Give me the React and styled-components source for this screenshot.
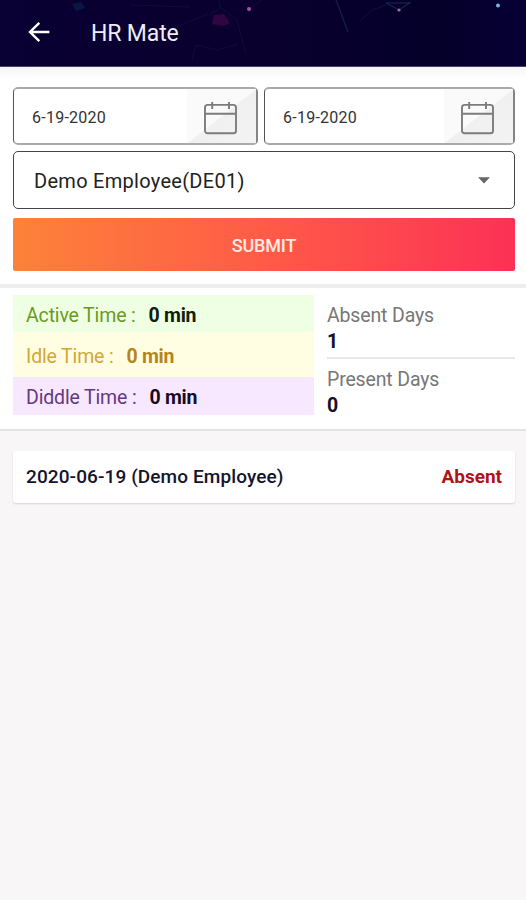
import React from "react"
import styled, { createGlobalStyle } from "styled-components"

const times = [
  { label: "Active Time :", value: "0 min", bg: "#efffe3", color: "#6b9a1f", strong: "#10200a", height: 37, top: 3 },
  { label: "Idle Time :", value: "0 min", bg: "#fffee2", color: "#d3a638", strong: "#b5851a", height: 45, top: 4 },
  { label: "Diddle Time :", value: "0 min", bg: "#f7e8ff", color: "#65387f", strong: "#170b26", height: 38, top: 3 },
]

const CalendarIcon = () => (
  <svg width="33" height="34" viewBox="0 0 33 34" fill="none" stroke="#7c7c7c" strokeWidth="1.9">
    <rect x="1" y="3.9" width="31" height="28.4" rx="2.6" />
    <path d="M1 12.7h31M8.2 1v7M25 1v7" />
  </svg>
)

const DateField = ({ value, width }) => (
  <DateBox $width={width}>
    <span>{value}</span>
    <div className="picker">
      <CalendarIcon />
    </div>
  </DateBox>
)

const Network = () => (
  <svg className="network" width="526" height="67" viewBox="0 0 526 67" fill="none">
    <path d="M219 0l1 8-10 7M220 7l17 13 9 34M192 60l4-15 22 5 20-6M130 5l60 2M250 8l12-8M208 14l-34 14" stroke="#29386a" strokeOpacity=".22" />
    <path d="M336 0l12 32" stroke="#34507f" strokeOpacity=".35" strokeWidth="1.4" />
    <path d="M386 3l13 7 12-8M387 3h23" stroke="#34507f" strokeOpacity=".5" />
    <path d="M386 5l-14 5-12 11" stroke="#34507f" strokeOpacity=".2" />
    <path d="M214 15l10-1 6 9-7 3-11-2z" fill="#4d0850" fillOpacity=".6" />
    <path d="M72 4l9-2 4 6-9 3z" fill="#123a70" fillOpacity=".35" />
    <circle cx="249" cy="9" r="2" fill="#a54db4" />
    <circle cx="399" cy="10" r="1.6" fill="#a0719e" />
    <circle cx="498" cy="5.5" r="2" fill="#77b4d8" />
  </svg>
)

const App = () => {
  return (
    <Page>
      <GlobalStyle />
      <Header>
        <Network />
        <svg className="back" width="24" height="22" viewBox="0 0 24 22" fill="none" stroke="#fff" strokeWidth="2.4">
          <path d="M12.3 1.8L3 11l9.3 9.2M3 11h19.4" />
        </svg>
        <h1>HR Mate</h1>
      </Header>
      <Form>
        <div className="dates">
          <DateField value="6-19-2020" width={245} />
          <DateField value="6-19-2020" width={251} />
        </div>
        <Select>
          <span>Demo Employee(DE01)</span>
          <svg width="12" height="7" viewBox="0 0 12 7">
            <path d="M0 .3h12L6 6.6z" fill="#666" />
          </svg>
        </Select>
        <Submit>SUBMIT</Submit>
      </Form>
      <Summary>
        <div className="times">
          {times.map(item => (
            <TimeRow key={item.label} $item={item}>
              <span>{item.label}</span>
              <strong>{item.value}</strong>
            </TimeRow>
          ))}
        </div>
        <div className="days">
          <Days>
            <span>Absent Days</span>
            <strong>1</strong>
          </Days>
          <Days>
            <span>Present Days</span>
            <strong>0</strong>
          </Days>
        </div>
      </Summary>
      <Record>
        <span>2020-06-19 (Demo Employee)</span>
        <span className="status">Absent</span>
      </Record>
    </Page>
  )
}

const GlobalStyle = createGlobalStyle`
  * {
    box-sizing: border-box;
  }
  body {
    margin: 0;
    background: #f8f6f7;
    font-family: Roboto, "Liberation Sans", sans-serif;
  }
`

const Page = styled.main`
  width: 526px;
  min-height: 900px;
  background: #f8f6f7;
`

const Header = styled.header`
  position: relative;
  display: flex;
  align-items: center;
  height: 67px;
  padding: 0 0 3px 27px;
  background: linear-gradient(90deg, #090033, #09002e 50%, #04002a 85%, #070035);
  border-bottom: 1px solid #4a4560;
  .network {
    position: absolute;
    top: 0;
    left: 0;
  }
  .back {
    position: relative;
    margin-right: 40px;
  }
  h1 {
    position: relative;
    margin: 0;
    padding-top: 4px;
    font-size: 23px;
    font-weight: 400;
    letter-spacing: -0.15px;
    line-height: 28px;
    color: #eeedf5;
  }
`

const Form = styled.section`
  height: 217px;
  padding: 20px 11px 0 13px;
  background: linear-gradient(#f5f5f5, #fff 12px);
  .dates {
    display: flex;
    justify-content: space-between;
    margin-bottom: 6px;
  }
`

const DateBox = styled.div`
  display: flex;
  justify-content: space-between;
  align-items: center;
  width: ${props => props.$width}px;
  height: 58px;
  padding-left: 18px;
  border: 2px solid #aaa;
  border-left: 1.5px solid #555;
  border-right-color: #858585;
  border-radius: 5px;
  background: #fff;
  font-size: 16px;
  letter-spacing: 0.25px;
  color: #333;
  span {
    padding-top: 2px;
  }
  .picker {
    display: flex;
    align-items: center;
    justify-content: center;
    width: 69px;
    height: 100%;
    padding: 3px 2px 0 0;
    background: linear-gradient(142deg, #fafafa 50%, #f0f0f0 51%, #f3f3f3);
  }
`

const Select = styled.div`
  display: flex;
  align-items: center;
  justify-content: space-between;
  height: 58px;
  padding: 1px 24px 0 20px;
  border: 1.5px solid #444;
  border-radius: 5px;
  font-size: 20px;
  letter-spacing: 0.29px;
  color: #222;
  span {
    padding-top: 1px;
  }
`

const Submit = styled.button`
  display: block;
  width: 100%;
  height: 53px;
  margin-top: 9px;
  padding: 1px 0 0;
  border: 0;
  border-radius: 2px;
  background: linear-gradient(90deg, #fd8239, #ff5b47 50%, #fc3155);
  font-family: inherit;
  font-size: 18px;
  font-weight: 500;
  letter-spacing: -0.2px;
  color: #ffe9e2;
`

const Summary = styled.section`
  display: flex;
  height: 147px;
  padding: 7px 11px 0 13px;
  border-top: 4px solid #eee;
  border-bottom: 2px solid #e5e4e5;
  background: #fff;
  .times {
    width: 301px;
    margin-right: 13px;
  }
  .days {
    flex: 1;
  }
`

const TimeRow = styled.div`
  display: flex;
  align-items: center;
  gap: 13px;
  height: ${props => props.$item.height}px;
  padding: ${props => props.$item.top}px 0 0 13px;
  background: ${props => props.$item.bg};
  font-size: 19.5px;
  letter-spacing: -0.15px;
  color: ${props => props.$item.color};
  strong {
    font-weight: 700;
    letter-spacing: -0.3px;
    color: ${props => props.$item.strong};
  }
`

const Days = styled.div`
  display: flex;
  flex-direction: column;
  height: 64px;
  padding-top: 8px;
  font-size: 19.5px;
  line-height: 26px;
  letter-spacing: -0.15px;
  color: #777;
  &:first-child {
    border-bottom: 2px solid #e8e8e8;
  }
  strong {
    font-weight: 700;
    color: #14112b;
  }
`

const Record = styled.article`
  display: flex;
  align-items: center;
  justify-content: space-between;
  height: 52px;
  margin: 20px 11px 0 13px;
  padding: 0 13px 1px;
  border-radius: 3px;
  background: #fff;
  box-shadow: 0 1px 2px rgba(0, 0, 0, 0.14);
  font-size: 19px;
  font-weight: 500;
  letter-spacing: 0.1px;
  color: #14142a;
  .status {
    font-weight: 700;
    letter-spacing: 0;
    color: #b01218;
  }
`

export default App
